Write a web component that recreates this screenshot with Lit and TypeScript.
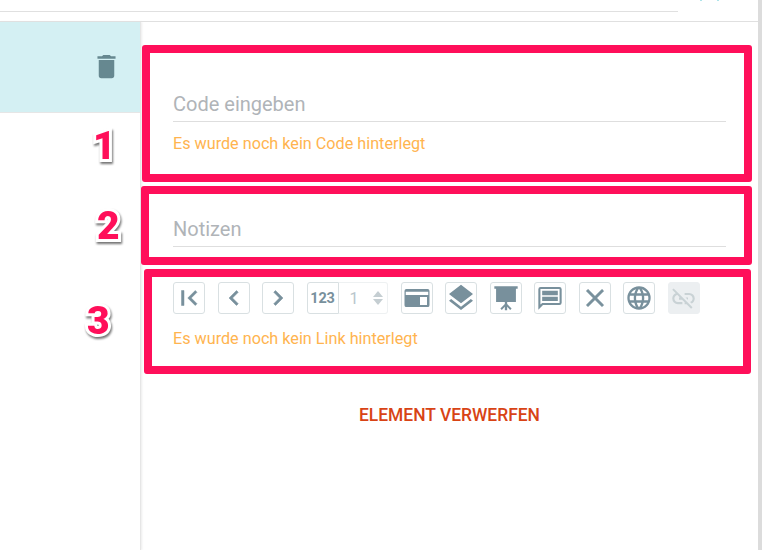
import { LitElement, html, css, svg } from "lit";
import { customElement } from "lit/decorators.js";

const P = {
  first: svg`<path d="M18.41,16.59L13.82,12L18.41,7.41L17,6L11,12L17,18L18.41,16.59M6,6H8V18H6V6Z"/>`,
  prev: svg`<path d="M15.41,16.58L10.83,12L15.41,7.41L14,6L8,12L14,18L15.41,16.58Z"/>`,
  next: svg`<path d="M8.59,16.58L13.17,12L8.59,7.41L10,6L16,12L10,18L8.59,16.58Z"/>`,
  card: svg`<path fill-rule="evenodd" d="M3.5,4.8H20.5A1.5,1.5 0 0 1 22,6.3V17.7A1.5,1.5 0 0 1 20.5,19.2H3.5A1.5,1.5 0 0 1 2,17.7V6.3A1.5,1.5 0 0 1 3.5,4.8ZM3,7V9.6H21V7ZM14.4,11.2V17.6H20V11.2Z"/>`,
  layers: svg`<path d="M12,16L19.36,10.27L21,9L12,2L3,9L4.63,10.27M12,18.54L4.62,12.81L3,14.07L12,21.07L21,14.07L19.37,12.8L12,18.54Z"/>`,
  board: svg`<path d="M2,2H22V4H20.5V15.5H13V17.2L16.8,21L15.6,22.2L13,19.6V22.5H11V19.6L8.4,22.2L7.2,21L11,17.2V15.5H3.5V4H2Z"/>`,
  comment: svg`<path fill-rule="evenodd" d="M4,2.5H20A2,2 0 0 1 22,4.5V16A2,2 0 0 1 20,18H6L2,22V4.5A2,2 0 0 1 4,2.5ZM3.8,4.3V17.5L5.3,16.2H20.2V4.3ZM5.3,5.8H18.7V9.6H5.3ZM5.3,10.9H18.7V14.6H5.3Z"/>`,
  close: svg`<path d="M19,6.41L17.59,5L12,10.59L6.41,5L5,6.41L10.59,12L5,17.59L6.41,19L12,13.41L17.59,19L19,17.59L13.41,12L19,6.41Z"/>`,
  web: svg`<path d="M16.36,14C16.44,13.34 16.5,12.68 16.5,12C16.5,11.32 16.44,10.66 16.36,10H19.74C19.9,10.64 20,11.31 20,12C20,12.69 19.9,13.36 19.74,14M14.59,19.56C15.19,18.45 15.65,17.25 15.97,16H18.92C17.96,17.65 16.43,18.93 14.59,19.56M14.34,14H9.66C9.56,13.34 9.5,12.68 9.5,12C9.5,11.32 9.56,10.65 9.66,10H14.34C14.43,10.65 14.5,11.32 14.5,12C14.5,12.68 14.43,13.34 14.34,14M12,19.96C11.17,18.76 10.5,17.43 10.09,16H13.91C13.5,17.43 12.83,18.76 12,19.96M8,8H5.08C6.03,6.34 7.57,5.06 9.4,4.44C8.8,5.55 8.35,6.75 8,8M5.08,16H8C8.35,17.25 8.8,18.45 9.4,19.56C7.57,18.93 6.03,17.65 5.08,16M4.26,14C4.1,13.36 4,12.69 4,12C4,11.31 4.1,10.64 4.26,10H7.64C7.56,10.66 7.5,11.32 7.5,12C7.5,12.68 7.56,13.34 7.64,14M12,4.03C12.83,5.23 13.5,6.57 13.91,8H10.09C10.5,6.57 11.17,5.23 12,4.03M18.92,8H15.97C15.65,6.75 15.19,5.55 14.59,4.44C16.43,5.07 17.96,6.34 18.92,8M12,2C6.47,2 2,6.5 2,12A10,10 0 0,0 12,22A10,10 0 0,0 22,12A10,10 0 0,0 12,2Z"/>`,
  off: svg`<path d="M17,7H13V8.9H17C18.71,8.9 20.1,10.29 20.1,12C20.1,13.43 19.12,14.63 17.79,15L19.25,16.44C20.88,15.61 22,13.95 22,12A5,5 0 0,0 17,7M16,11H13.81L15.81,13H16V11M2,4.27L5.11,7.38C3.29,8.12 2,9.91 2,12A5,5 0 0,0 7,17H11V15.1H7C5.29,15.1 3.9,13.71 3.9,12C3.9,10.41 5.11,9.1 6.66,8.93L8.73,11H8V13H10.73L13,15.27V17H14.73L18.74,21L20,19.74L3.27,3L2,4.27Z"/>`,
  trash: svg`<path d="M19,4H15.5L14.5,3H9.5L8.5,4H5V6H19M6,19A2,2 0 0,0 8,21H16A2,2 0 0,0 18,19V7H6V19Z"/>`,
};

const icon = (p: unknown, size = 24) =>
  html`<svg width=${size} height=${size} viewBox="0 0 24 24" fill="currentColor">${p}</svg>`;

@customElement("app-root")
export class AppRoot extends LitElement {
  static styles = css`
    :host {
      display: flex;
      position: relative;
      width: 762px;
      height: 550px;
      overflow: hidden;
      background: #fff;
      font-family: Roboto, "Liberation Sans", sans-serif;
    }
    .page {
      flex: 1;
      min-width: 0;
      display: flex;
      flex-direction: column;
    }
    .scroll {
      width: 4px;
      flex: none;
      background: #dcdcdc;
    }
    .top {
      height: 21px;
      flex: none;
      border-bottom: 1px solid #e0e0e0;
      position: relative;
    }
    .topline {
      height: 11px;
      width: 678px;
      border-bottom: 1px solid #e0e0e0;
    }
    .dots {
      position: absolute;
      left: 700px;
      top: 0;
      width: 15px;
      height: 1px;
      border-left: 2px solid #aee4ea;
      border-right: 2px solid #aee4ea;
    }
    .main {
      display: flex;
      flex: 1;
    }
    .side {
      width: 140px;
      flex: none;
      border-right: 1px solid #e6e6e6;
      box-shadow: 1px 0 2px rgba(0, 0, 0, 0.08);
    }
    .sel {
      height: 91px;
      background: #d4f0f3;
      border-bottom: 1px solid #e6e6e6;
      display: flex;
      justify-content: flex-end;
      align-items: flex-start;
      padding: 29px 18px 0 0;
      box-sizing: border-box;
      color: #668890;
    }
    .content {
      flex: 1;
      padding: 0 32px 0 32px;
      display: flex;
      flex-direction: column;
      min-width: 0;
    }
    .field {
      border-bottom: 1px solid #dedede;
      color: #b0b4b8;
      font-size: 20px;
      line-height: 24px;
      padding-bottom: 5px;
    }
    .code {
      margin-top: 70px;
    }
    .notes {
      margin-top: 63px;
    }
    .hint {
      color: #ffb44f;
      font-size: 16.2px;
      line-height: 20px;
    }
    .hint.a {
      margin-top: 12px;
    }
    .hint.b {
      margin-top: 15px;
    }
    .bar {
      display: flex;
      margin-top: 35px;
      height: 32px;
    }
    .btn {
      width: 32px;
      height: 32px;
      box-sizing: border-box;
      border: 1px solid #d9e0e2;
      border-radius: 3px;
      color: #78909c;
      display: flex;
      align-items: center;
      justify-content: center;
      flex: none;
      margin-right: 12.5px;
    }
    .btn svg {
      flex: none;
    }
    .btn.heavy svg {
      stroke: currentColor;
      stroke-width: 0.4;
    }
    .btn.num {
      margin-right: 0;
      font-size: 14.5px;
      font-weight: 700;
      letter-spacing: -0.2px;
      border-radius: 3px 0 0 3px;
    }
    .btn.dis {
      background: #eceff1;
      border-color: #eceff1;
      color: #c9d2d5;
    }
    .stepper {
      width: 49px;
      height: 32px;
      box-sizing: border-box;
      border: 1px solid #eef1f2;
      border-left: none;
      border-radius: 0 3px 3px 0;
      margin-right: 13px;
      display: flex;
      align-items: center;
      justify-content: space-between;
      padding: 0 4px 0 11px;
      color: #b9c6cc;
      font-size: 16px;
      flex: none;
    }
    .spin {
      display: flex;
      flex-direction: column;
      gap: 2px;
    }
    .up,
    .down {
      width: 0;
      height: 0;
      border-left: 5.5px solid transparent;
      border-right: 5.5px solid transparent;
    }
    .up {
      border-bottom: 6px solid #c5ced2;
    }
    .down {
      border-top: 6px solid #c5ced2;
    }
    .discard {
      margin-top: 56px;
      text-align: center;
      color: #d84315;
      font-size: 17.45px;
      font-weight: 500;
      line-height: 20px;
    }
    .mark {
      position: absolute;
      box-sizing: border-box;
      border: 8px solid #ff0f5a;
      border-radius: 3px;
    }
    .m1 {
      left: 142px;
      top: 45px;
      width: 610px;
      height: 137px;
    }
    .m2 {
      left: 141px;
      top: 186px;
      width: 611px;
      height: 79px;
    }
    .m3 {
      left: 144px;
      top: 269px;
      width: 607px;
      height: 105px;
    }
    .digit {
      position: absolute;
      color: #ff0f5a;
      font-size: 39px;
      font-weight: 900;
      line-height: 38px;
      -webkit-text-stroke: 6px #fff;
      paint-order: stroke fill;
      filter: drop-shadow(1px 2px 1px rgba(0, 0, 0, 0.55));
    }
    .d1 {
      left: 93px;
      top: 127px;
    }
    .d2 {
      left: 97px;
      top: 207px;
    }
    .d3 {
      left: 87px;
      top: 302px;
    }
  `;

  render() {
    return html`
      <div class="page">
        <div class="top"><div class="topline"></div><div class="dots"></div></div>
        <div class="main">
          <aside class="side">
            <div class="sel">${icon(P.trash, 31)}</div>
          </aside>
          <section class="content">
            <div class="field code">Code eingeben</div>
            <div class="hint a">Es wurde noch kein Code hinterlegt</div>
            <div class="field notes">Notizen</div>
            <div class="bar">
              <span class="btn heavy">${icon(P.first, 30)}</span>
              <span class="btn heavy">${icon(P.prev, 30)}</span>
              <span class="btn heavy">${icon(P.next, 30)}</span>
              <span class="btn num">123</span>
              <span class="stepper">1<span class="spin"><i class="up"></i><i class="down"></i></span></span>
              <span class="btn">${icon(P.card, 30)}</span>
              <span class="btn">${icon(P.layers, 32)}</span>
              <span class="btn">${icon(P.board, 28)}</span>
              <span class="btn">${icon(P.comment, 28)}</span>
              <span class="btn heavy">${icon(P.close, 30)}</span>
              <span class="btn">${icon(P.web, 28)}</span>
              <span class="btn dis">${icon(P.off, 27)}</span>
            </div>
            <div class="hint b">Es wurde noch kein Link hinterlegt</div>
            <div class="discard">ELEMENT VERWERFEN</div>
          </section>
        </div>
      </div>
      <div class="scroll"></div>
      <div class="mark m1"></div>
      <div class="mark m2"></div>
      <div class="mark m3"></div>
      <div class="digit d1">1</div>
      <div class="digit d2">2</div>
      <div class="digit d3">3</div>
    `;
  }
}
